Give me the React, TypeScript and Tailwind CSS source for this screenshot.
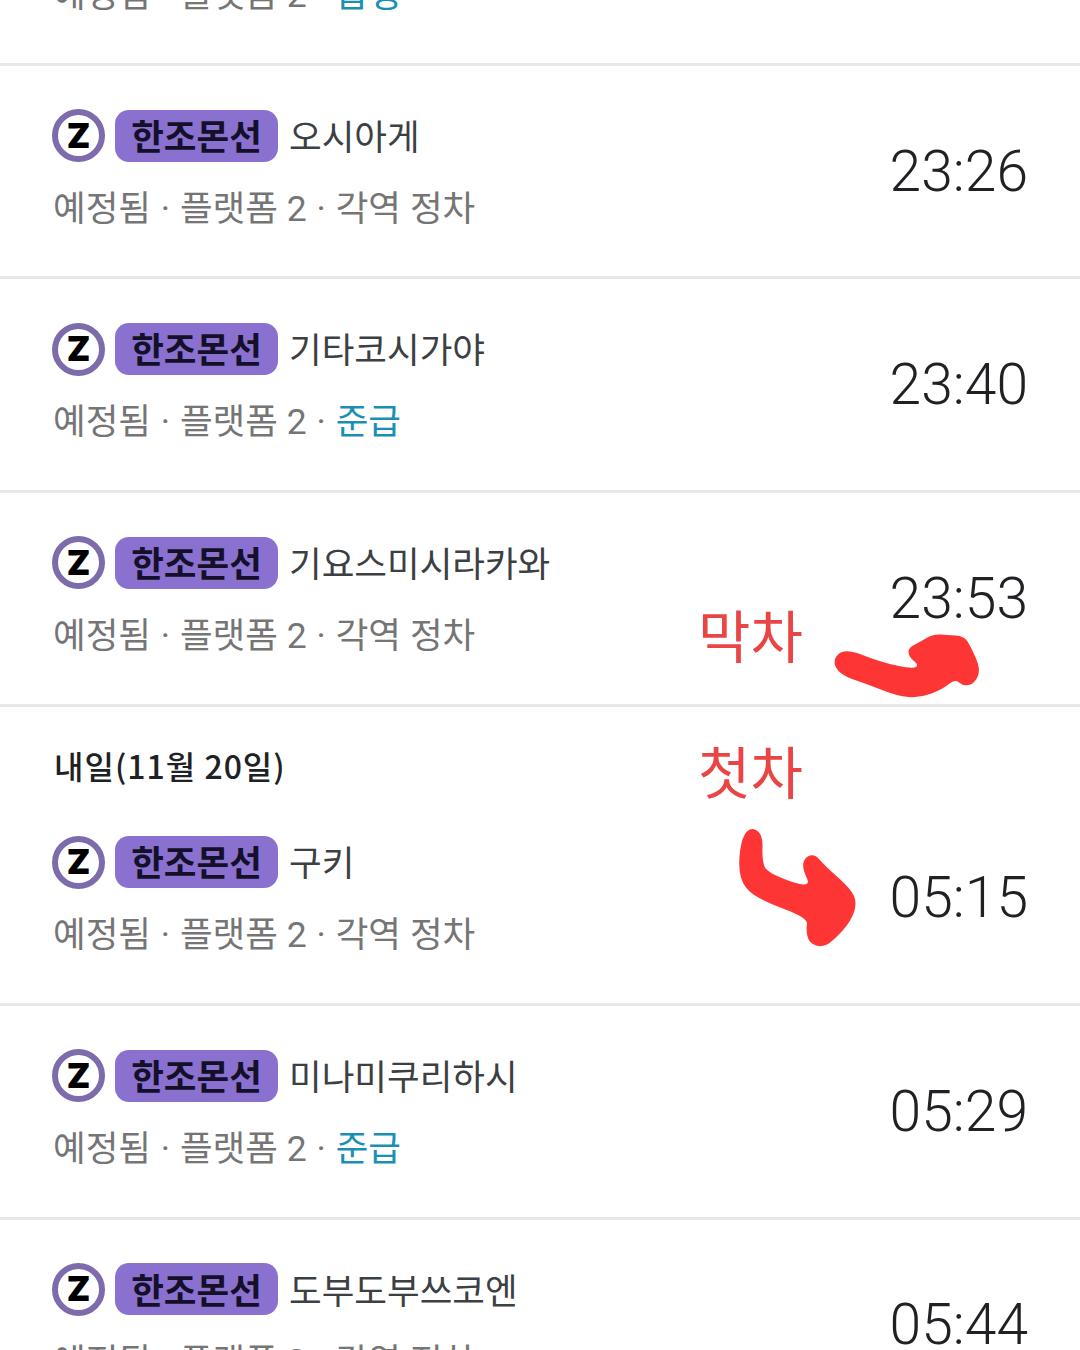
import React from 'react';

type Train = { station: string; kind: string; express?: boolean; time: string; dateBefore?: string };

const TRAINS: Train[] = [
  { station: '아사쿠사', kind: '급행', express: true, time: '23:12' },
  { station: '오시아게', kind: '각역 정차', time: '23:26' },
  { station: '기타코시가야', kind: '준급', express: true, time: '23:40' },
  { station: '기요스미시라카와', kind: '각역 정차', time: '23:53' },
  { station: '구키', kind: '각역 정차', time: '05:15', dateBefore: '내일(11월 20일)' },
  { station: '미나미쿠리하시', kind: '준급', express: true, time: '05:29' },
  { station: '도부도부쓰코엔', kind: '각역 정차', time: '05:44' },
];

const ARROW_LAST = [[832,660],[845,648],[880,662],[913,669],[919,665],[909,657],[908,648],[920,642],[933,634],[947,635],[964,636],[971,647],[981,670],[974,684],[963,686],[955,679],[943,689],[920,698],[897,696],[867,684],[840,675]];
const ARROW_FIRST = [[742,836],[752,827],[763,835],[762,860],[767,873],[812,889],[802,868],[805,857],[815,854],[824,865],[851,889],[857,903],[851,921],[836,938],[823,948],[809,943],[806,930],[808,918],[763,901],[744,888],[738,867]];

// closes a rough outline into a smooth marker blob
const blob = (pts: number[][]) => {
  const mid = (a: number[], b: number[]) => `${(a[0] + b[0]) / 2} ${(a[1] + b[1]) / 2}`;
  let d = `M${mid(pts[pts.length - 1], pts[0])}`;
  pts.forEach((p, i) => {
    d += ` Q${p[0]} ${p[1]} ${mid(p, pts[(i + 1) % pts.length])}`;
  });
  return d + 'Z';
};

const Row: React.FC<{ train: Train }> = ({ train }) => (
  <div className="border-b-[3px] border-[#e8e8e8]">
    {train.dateBefore && (
      <div className="h-[85.5px] pt-[36px] pl-[54px] text-[32px] leading-[44px] font-medium text-[#202124] tracking-[1px]">
        {train.dateBefore}
      </div>
    )}
    <div className="h-[210.7px] flex items-center justify-between pl-[52px] pr-[52px]">
      <div className="flex flex-col gap-[18px] pb-[3px]">
        <div className="flex items-center h-[54px]">
          <div className="w-[53px] h-[53px] rounded-full border-[6px] border-[#7d6bab] bg-white flex items-center justify-center">
            <span className="font-['Inter',sans-serif] font-black text-[34px] leading-none text-black">Z</span>
          </div>
          <div className="ml-[10px] h-[52px] w-[163px] pb-[2px] rounded-[14px] bg-[#8a70cf] flex items-center justify-center text-[35.5px] font-bold text-[#14102a] leading-none">
            한조몬선
          </div>
          <span className="ml-[11px] pb-[2px] text-[35.5px] leading-none text-[#3c4043]">{train.station}</span>
        </div>
        <div className="pl-[1px] h-[50px] leading-[50px] text-[35.5px] text-[#757575] [word-spacing:1px]">
          예정됨<span className="font-['Roboto',sans-serif]"> · </span>플랫폼 <span className="font-['Roboto',sans-serif]">2 · </span>
          <span className={train.express ? 'text-[#1a8fb5]' : ''}>{train.kind}</span>
        </div>
      </div>
      <div className="font-['Roboto',sans-serif] font-[350] text-[57px] leading-none text-[#202124]">{train.time}</div>
    </div>
  </div>
);

export default function App() {
  return (
    <div className="relative w-[1080px] h-[1350px] overflow-hidden bg-white font-['Noto_Sans_CJK_KR','Noto_Sans',sans-serif]">
      <div className="-mt-[148px]">
        {TRAINS.map(t => (
          <Row key={t.time} train={t} />
        ))}
      </div>

      {/* hand-drawn notes on top of the screenshot */}
      <span className="absolute left-[698px] top-[600px] text-[57px] leading-[66px] text-[#ea4545]">막차</span>
      <span className="absolute left-[698px] top-[736px] text-[57px] leading-[66px] text-[#ea4545]">첫차</span>
      <svg className="absolute left-0 top-0 pointer-events-none" width="1080" height="1350" fill="#fd3535">
        <path d={blob(ARROW_LAST)} />
        <path d={blob(ARROW_FIRST)} />
      </svg>
    </div>
  );
}
